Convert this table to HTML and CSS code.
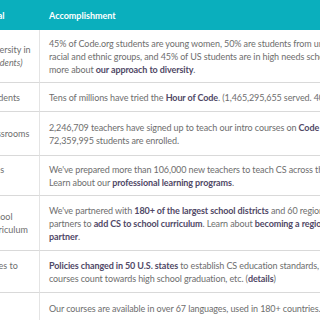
FILE: index.html
```html
<!DOCTYPE html>
<html>
<head>
<meta charset="utf-8">
<link rel="stylesheet" href="styles.css">
</head>
<body>
<div class="grid">
  <div class="cell goal head">Goal</div>
  <div class="cell acc head">Accomplishment</div>

  <div class="cell goal">Diversity in<br><em>(students)</em></div>
  <div class="cell acc">45% of Code.org students are young women, 50% are students from underrepresented<br>racial and ethnic groups, and 45% of US students are in high needs schools. Learn<br>more about <b>our approach to diversity</b>.</div>

  <div class="cell goal">students</div>
  <div class="cell acc">Tens of millions have tried the <b>Hour of Code</b>. (1,465,295,655 served. 40% girls.)</div>

  <div class="cell goal">classrooms</div>
  <div class="cell acc">2,246,709 teachers have signed up to teach our intro courses on <b>Code Studio</b>, and<br>72,359,995 students are enrolled.</div>

  <div class="cell goal">Labs<br>PD</div>
  <div class="cell acc">We've prepared more than 106,000 new teachers to teach CS across the country.<br>Learn about our <b>professional learning programs</b>.</div>

  <div class="cell goal">School<br>curriculum</div>
  <div class="cell acc">We've partnered with <b>180+ of the largest school districts</b> and 60 regional<br>partners to <b>add CS to school curriculum</b>. Learn about <b>becoming a regional</b><br><b>partner</b>.</div>

  <div class="cell goal">Rules to<br>fit</div>
  <div class="cell acc"><b>Policies changed in 50 U.S. states</b> to establish CS education standards, make<br>courses count towards high school graduation, etc. (<b>details</b>)</div>

  <div class="cell goal">All</div>
  <div class="cell acc">Our courses are available in over 67 languages, used in 180+ countries.</div>
</div>
</body>
</html>
```
FILE: styles.css
```css
html, body {
  margin: 0;
  padding: 0;
  background: #ffffff;
  overflow: hidden;
  width: 320px;
  height: 320px;
}
.grid {
  display: grid;
  grid-template-columns: 62px 640px;
  grid-template-rows: 30px 53px 29px 44px 40px 55px 42px 32px;
  margin-left: -22px;
  font-family: Lato, "Open Sans", sans-serif;
  font-size: 9px;
  line-height: 13px;
  color: #6e6e6e;
}
.cell {
  box-sizing: border-box;
  display: block;
  align-content: center;
  white-space: nowrap;
  border-bottom: 1px solid #d9d9d9;
}
.goal {
  padding: 0 8px;
  border-right: 1px solid #e4e4e4;
}
.acc {
  padding: 0 9px;
  letter-spacing: -0.1px;
}
.head {
  background: #0aafbd;
  color: #ffffff;
  font-weight: 700;
  font-size: 9px;
  letter-spacing: 0;
  border-bottom: none;
  border-right-color: #0aafbd;
}
b {
  color: #504866;
  font-weight: 700;
}
em {
  font-style: italic;
}
```
